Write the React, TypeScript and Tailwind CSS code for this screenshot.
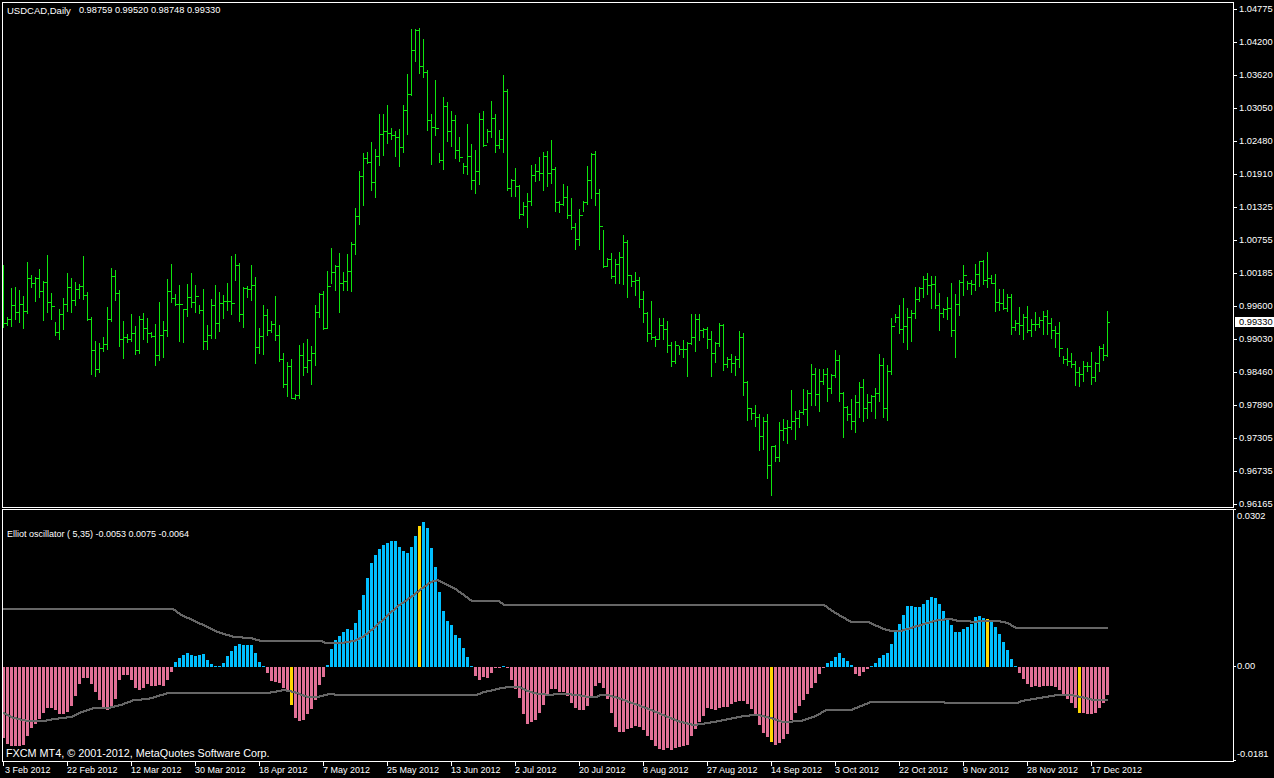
const mainBars = [
  [265,327,323],[317,325,319],[288,326,305],[287,319,312],[290,322,304],[296,328,311],[262,313,278],[275,287,283],[277,301,278],[269,297,291],
  [281,320,282],[255,312,302],[293,319,306],[322,335,332],[309,339,314],[298,329,304],[273,311,287],[278,312,300],[282,305,289],[284,298,286],
  [256,299,295],[292,320,319],[317,374,350],[341,376,369],[343,372,348],[337,351,344],[307,349,319],[268,321,276],[270,300,293],[290,346,339],
  [321,358,337],[334,342,339],[314,341,333],[326,354,350],[316,353,319],[313,339,328],[318,342,333],[332,337,336],[324,365,355],[302,360,335],
  [321,357,330],[279,336,291],[264,302,298],[294,305,304],[285,341,304],[309,342,309],[284,316,297],[273,307,302],[285,312,296],[305,313,310],
  [289,349,341],[325,349,335],[299,338,305],[285,338,323],[292,331,303],[295,318,301],[283,310,301],[256,314,303],[254,280,265],[263,321,314],
  [287,327,288],[286,297,289],[265,300,285],[277,363,347],[328,353,336],[305,354,315],[309,335,330],[321,332,324],[296,340,335],[325,361,359],
  [353,387,384],[362,396,366],[359,398,398],[394,399,395],[345,398,355],[343,375,367],[339,372,360],[346,384,353],[305,365,312],[293,317,294],
  [291,329,328],[271,328,286],[248,283,272],[265,290,266],[253,312,283],[272,290,281],[254,290,271],[242,291,244],[208,254,216],
  [171,224,176],[153,205,158],[152,163,162],[142,190,182],[149,197,156],[114,165,134],[114,155,131],[105,143,133],[128,139,135],[131,156,137],
  [129,166,147],[105,152,110],[74,134,94],[29,95,50],[29,61,30],[28,73,66],[39,77,72],[70,130,120],[114,164,127],[80,135,128],
  [153,162,160],[97,169,106],[102,141,131],[111,146,120],[115,158,150],[137,161,157],[163,173,166],[124,174,156],[144,189,180],[150,193,171],
  [113,184,119],[111,146,145],[129,142,131],[101,137,118],[114,152,145],[130,148,139],[75,152,91],[89,190,188],[179,196,180],[168,196,186],
  [185,218,214],[202,215,206],[193,227,201],[165,205,175],[164,181,171],[157,180,173],[152,190,156],[151,186,173],[140,183,169],[167,211,202],
  [201,212,204],[184,205,197],[186,218,215],[198,229,227],[223,249,239],[209,245,215],[201,211,202],[166,204,180],[153,198,154],[151,205,193],
  [189,249,226],[230,267,266],[258,266,259],[253,278,276],[259,283,264],[252,283,257],[235,284,242],[240,297,275],[275,286,281],[272,295,280],
  [277,307,299],[291,322,313],[312,341,333],[301,339,337],[336,346,339],[318,339,325],[318,339,329],[321,352,345],[342,366,361],[341,363,345],
  [346,354,349],[340,357,349],[342,376,343],[314,344,337],[314,351,319],[314,340,330],[328,337,329],[327,348,339],[331,376,353],[342,362,343],
  [323,346,325],[324,370,364],[357,367,359],[354,372,363],[356,375,359],[331,367,337],[333,395,382],[381,420,408],[408,419,413],[405,426,417],
  [414,450,436],[417,449,421],[414,478,465],[446,495,446],[445,461,457],[422,461,430],[419,440,428],[420,443,427],[390,429,421],[411,439,418],
  [410,427,412],[389,414,409],[390,425,393],[364,405,374],[368,405,394],[369,411,381],[369,384,374],[368,401,388],[374,393,375],[350,377,360],
  [355,401,393],[392,437,407],[406,420,414],[399,429,421],[395,432,402],[382,417,387],[379,421,408],[394,418,402],[395,411,396],[388,418,393],
  [354,401,365],[358,417,408],[365,420,371],[318,374,326],[314,322,317],[305,333,329],[298,342,326],[308,349,317],[310,341,313],[287,318,299],
  [287,301,288],[276,297,279],[273,294,285],[276,308,284],[276,308,305],[293,330,313],[308,317,309],[297,319,308],[283,336,330],[294,357,304],
  [280,315,282],[265,295,275],[281,289,283],[280,294,284],[264,290,274],[261,286,261],[260,284,280],[252,287,278],[275,283,283],[274,311,302],
  [289,310,303],[289,309,308],[294,311,297],[294,334,327],[320,330,323],[307,334,325],[314,339,317],[306,332,330],[319,336,324],[312,330,324],
  [317,327,320],[311,334,316],[310,334,323],[318,338,330],[326,347,333],[322,356,348],[356,363,359],[348,365,361],[353,367,364],[361,385,372],
  [367,386,374],[361,381,366],[362,371,366],[352,384,377],[362,381,363],[346,371,348],[344,360,355],[311,356,322],
]

const oscillator = [
  -71,-77,-79,-79,-79,-78,-69,-61,-57,-52,-46,-41,-41,-43,-47,-47,-45,-39,-29,-17,-11,-11,-17,-25,-33,-41,-43,-41,-32,-13,-8,-8,-13,-21,-23,-21,-17,-19,-19,-18,-19,-13,-5,
  5,9,12,14,12,11,12,13,7,3,1,1,4,11,16,21,23,22,22,22,14,5,1,
  -6,-14,-15,-16,-21,-25,-38,-51,-54,-53,-47,-42,-33,-18,-10,
  2,18,27,31,35,38,37,44,57,72,89,104,112,118,122,124,126,126,120,116,114,120,131,141,145,139,119,100,75,56,46,42,32,29,19,10,1,
  -9,-13,-10,-11,-6,-1,-1,1,-1,-13,-22,-31,-47,-57,-55,-53,-46,-38,-28,-22,-22,-25,-25,-29,-36,-41,-43,-43,-39,-29,-19,-16,-21,-32,-46,-60,-65,-65,-62,-61,-59,-60,-63,-69,-73,-79,-82,-83,-81,-83,-81,-80,-79,-78,-69,-62,-55,-49,-41,-42,-43,-41,-40,-40,-37,-35,-34,-34,-37,-42,-47,-58,-66,-70,-75,-78,-76,-72,-67,-53,-46,-39,-33,-27,-21,-16,-7,-1,
  4,6,10,14,9,6,2,-7,-9,-5,-2,1,4,9,12,14,23,36,43,52,61,61,60,60,63,67,70,69,63,56,48,42,35,35,38,40,43,50,51,49,48,46,40,33,25,17,8,1,
  -6,-12,-17,-20,-19,-20,-19,-19,-19,-20,-23,-28,-32,-36,-41,-46,-46,-47,-47,-46,-41,-36,-28,
]

const gold = [72, 104, 192, 246, 269]

const upperBand = '3,609 172,609 182,616 187,618 200,624 217,632 233,637 250,638 260,641 320,641 325,643 340,643 353,641 363,636 373,628 387,615 397,606 413,595 420,589 430,582 437,580 443,583 453,588 463,595 471,601 498,601 503,605 823,605 833,612 850,622 867,622 883,629 890,631 900,631 923,624 937,620 950,619 957,621 967,621 973,622 980,621 997,621 1007,623 1015,628 1107,628'
const lowerBand = '3,713 13,718 27,721 43,721 53,719 70,717 78,713 93,708 107,708 120,705 133,700 147,699 167,693 173,693 267,693 283,690 293,692 307,697 317,697 328,694 340,695 475,695 483,692 493,690 500,688 508,687 518,687 527,691 537,694 552,695 553,694 565,694 577,695 587,697 595,697 600,695 607,695 617,698 637,705 650,710 667,717 677,721 693,725 707,723 723,720 743,716 753,715 758,715 773,719 782,722 800,721 815,716 825,710 850,710 870,702 1017,703 1020,701 1033,699 1050,696 1057,695 1070,695 1080,697 1093,700 1107,700'

const priceLabels = ['1.04775','1.04200','1.03620','1.03050','1.02480','1.01910','1.01325','1.00755','1.00185','0.99600','0.99030','0.98460','0.97890','0.97305','0.96735','0.96165']
const dates = ['3 Feb 2012','22 Feb 2012','12 Mar 2012','30 Mar 2012','18 Apr 2012','7 May 2012','25 May 2012','13 Jun 2012','2 Jul 2012','20 Jul 2012','8 Aug 2012','27 Aug 2012','14 Sep 2012','3 Oct 2012','22 Oct 2012','9 Nov 2012','28 Nov 2012','17 Dec 2012']

const GREEN = '#0ee60e'

// the terminal draws its 2px lines as 2x2 blocks, one per column
function bandPixels(points: string) {
  const pts = points.split(' ').map((p) => p.split(',').map(Number))
  const pixels: [number, number][] = []
  for (let i = 1; i < pts.length; i++) {
    const [x0, y0] = pts[i - 1]
    const [x1, y1] = pts[i]
    for (let x = x0; x < x1; x++) {
      pixels.push([x, Math.round(y0 + ((y1 - y0) * (x - x0)) / (x1 - x0))])
    }
  }
  return pixels
}

function PriceChart() {
  return (
    <svg className="block" width={1230} height={503} viewBox="3 3 1230 503" shapeRendering="crispEdges">
      {mainBars.map(([top, bottom, close], i) => {
        const x = 3 + 4 * i
        const open = i > 0 ? mainBars[i - 1][2] : close
        return (
          <g key={i} fill={GREEN}>
            <rect x={x} y={top} width={1} height={bottom - top + 1} />
            <rect x={x - 1} y={open} width={1} height={1} />
            <rect x={x + 1} y={close} width={2} height={1} />
          </g>
        )
      })}
    </svg>
  )
}

function OscillatorChart() {
  return (
    <svg className="block" width={1230} height={251} viewBox="3 510 1230 251" shapeRendering="crispEdges">
      {oscillator.map((v, i) => {
        const color = gold.includes(i) ? '#ffd700' : v > 0 ? '#00bfff' : '#e17096'
        return (
          <rect key={i} x={2 + 4 * i} y={v > 0 ? 667 - v : 667} width={3} height={Math.abs(v)} fill={color} />
        )
      })}
      <g fill="#666666">
        {[...bandPixels(upperBand), ...bandPixels(lowerBand)].map(([x, y], i) => (
          <rect key={i} x={x} y={y - 1} width={2} height={2} />
        ))}
      </g>
    </svg>
  )
}

export default function App() {
  return (
    <div className="w-[1274px] h-[778px] overflow-hidden bg-black text-white pt-[2px] pl-[2px] flex flex-col font-['Liberation_Sans',Arial,sans-serif] text-[9px] leading-[9px]">
      {/* price window */}
      <div className="flex h-[506px] shrink-0">
        <div className="relative w-[1232px] border border-white">
          <PriceChart />
          <div className="absolute left-[4px] top-[3px] flex whitespace-pre">
            <span className="text-[9.5px]">USDCAD,Daily</span>
            <span className="ml-[8px] text-[9.25px]">0.98759 0.99520 0.98748 0.99330</span>
          </div>
        </div>
        <div className="relative flex-1 flex flex-col gap-[24px] pt-[3px]">
          {priceLabels.map((p) => (
            <div key={p} className="flex items-start h-[9px] shrink-0">
              <span className="w-[3px] h-px mt-[4px] bg-white" />
              <span className="ml-[2px] text-[9.3px]">{p}</span>
            </div>
          ))}
          <div className="absolute left-[1px] top-[315px] w-[39px] h-[10px] bg-white text-black pl-[4px] leading-[10px] text-[9.3px]">0.99330</div>
        </div>
      </div>

      {/* oscillator window */}
      <div className="flex h-[253px] shrink-0 mt-px">
        <div className="relative w-[1232px] border border-white">
          <OscillatorChart />
          <div className="absolute left-[4px] top-[20px] whitespace-pre">Elliot oscillator ( 5,35) -0.0053 0.0075 -0.0064</div>
          <div className="absolute left-[3px] bottom-[1px] text-[10.8px] leading-[13px] whitespace-pre">FXCM MT4, © 2001-2012, MetaQuotes Software Corp.</div>
        </div>
        <div className="relative flex-1 flex flex-col pt-[3px] pl-[3px]">
          <span className="absolute left-0 top-0 w-[2px] h-px bg-white" />
          <span className="absolute left-0 top-[157px] w-[2px] h-px bg-white" />
          <span className="absolute left-0 top-[251px] w-[2px] h-px bg-white" />
          <span className="h-[9px] text-[9.3px]">0.0302</span>
          <span className="h-[9px] mt-[141px] text-[9.3px]">0.00</span>
          <span className="h-[9px] mt-[79px] text-[9.3px]">-0.0181</span>
        </div>
      </div>

      {/* time axis */}
      <div className="flex pl-px">
        {dates.map((d, i) => (
          <div key={d} className="w-[64px] shrink-0 flex flex-col h-[15px]">
            <span className="w-px h-[4px] bg-white" />
            <span className={i === 0 ? 'ml-[2px] whitespace-nowrap' : 'whitespace-nowrap'}>{d}</span>
          </div>
        ))}
      </div>
    </div>
  )
}
